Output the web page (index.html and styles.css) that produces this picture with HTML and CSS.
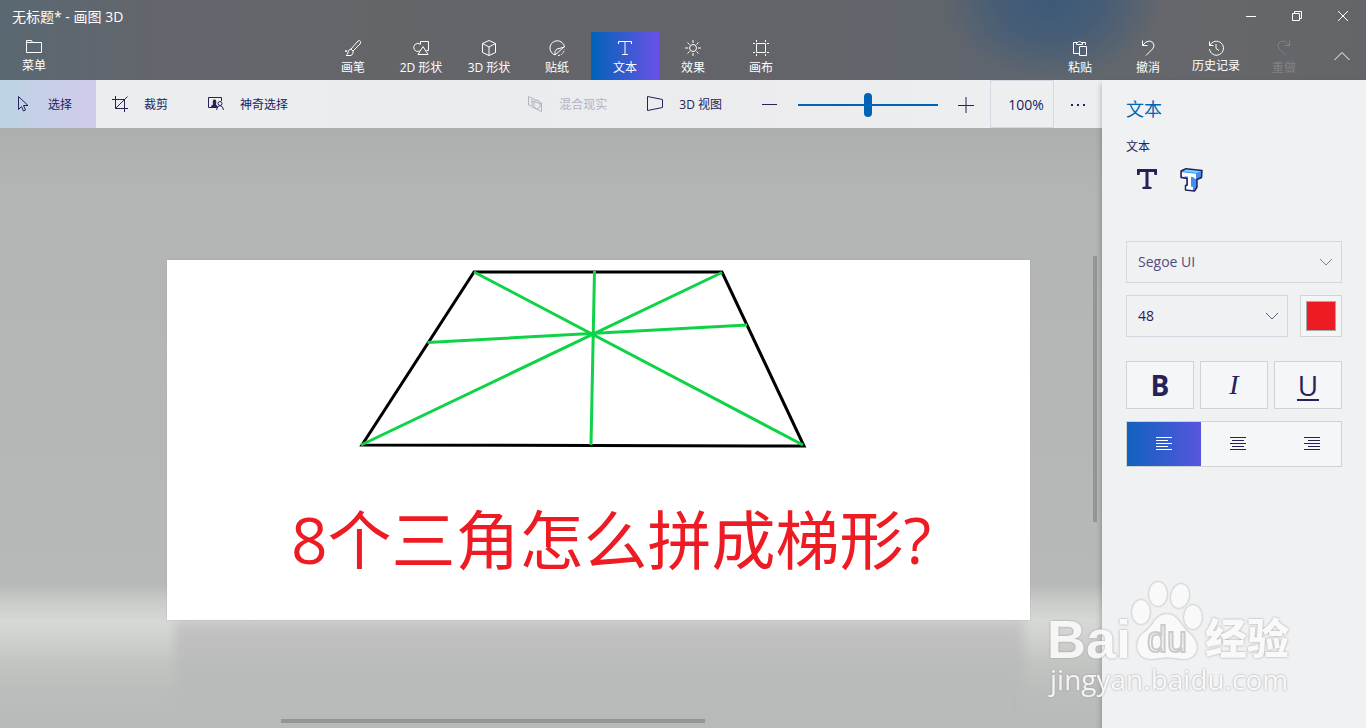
FILE: index.html
```
<!DOCTYPE html>
<html lang="zh-CN">
<head>
  <meta charset="UTF-8">
  <meta name="viewport" content="width=device-width, initial-scale=1.0">
  <title>无标题* - 画图 3D</title>
  <link rel="stylesheet" href="styles.css">
</head>
<body>
  <header class="header">
    <div class="titlebar">
      <h1>无标题* - 画图 3D</h1>
      <div class="window-buttons">
        <button type="button" aria-label="最小化"><svg width="10" height="10" viewBox="0 0 10 10"><path d="M0 5.5h10"/></svg></button>
        <button type="button" aria-label="还原"><svg width="10" height="10" viewBox="0 0 10 10"><path d="M.5 2.5h7v7h-7zM2.5 2.5v-2h7v7h-2"/></svg></button>
        <button type="button" aria-label="关闭"><svg width="10" height="10" viewBox="0 0 10 10"><path d="M0 0l10 10M10 0L0 10"/></svg></button>
      </div>
    </div>
    <nav class="ribbon">
      <button type="button" class="tool tight"><svg width="16" height="16" viewBox="0 0 16 16"><path d="M.5 12.500V.500h5l1 2h9v10zM.5 2.500h6"/></svg><span>菜单</span></button>
      <div class="tools">
        <button type="button" class="tool"><svg width="16" height="16" viewBox="0 0 16 16"><path d="M6 9l7-8q2-1 2.500.500Q16 3 15 4l-7 7zM6 9l2 2q1 3-2 4.500H1q2-1 2-3.500 0-2 3-3zM0 11h2M1 10v2"/></svg><span>画笔</span></button>
        <button type="button" class="tool"><svg width="16" height="16" viewBox="0 0 16 16"><path d="M7.500 4V1.500h8v9h-2M7.500 4.500a4 4 0 1 0-1 6.500M5 14.500l5-8 5 8z"/></svg><span>2D 形状</span></button>
        <button type="button" class="tool"><svg width="16" height="16" viewBox="0 0 16 16"><path d="M8 .5l6.500 3v9L8 15.500l-6.500-3v-9zM1.500 3.500L8 7l6.500-3.500M8 7v8.500"/></svg><span>3D 形状</span></button>
        <button type="button" class="tool"><svg width="16" height="16" viewBox="0 0 16 16"><path d="M6 15A7.300 7.300 0 1 1 15.500 7M6 15q-1-4 2-6 4-1 7.500-2M6 15l9-8"/><path stroke-dasharray="2 1" d="M9 15.500q5-.500 6.500-6"/></svg><span>贴纸</span></button>
        <button type="button" class="tool active"><svg width="16" height="16" viewBox="0 0 16 16"><path d="M1.500 4V1.500h13V4M8 1.500v13M5 14.500h6"/></svg><span>文本</span></button>
        <button type="button" class="tool"><svg width="16" height="16" viewBox="0 0 16 16"><circle cx="8" cy="8" r="3.500"/><path d="M8 0v3M8 13v3M0 8h3M13 8h3M2.500 2.500l2 2M11.500 11.500l2 2M13.500 2.500l-2 2M4.500 11.500l-2 2"/></svg><span>效果</span></button>
        <button type="button" class="tool"><svg width="16" height="16" viewBox="0 0 16 16"><path d="M3.500 3.500h9v9h-9zM3.500 0v2M12.500 0v2M3.500 14v2M12.500 14v2M0 3.500h2M14 3.500h2M0 12.500h2M14 12.500h2"/></svg><span>画布</span></button>
      </div>
      <button type="button" class="tool"><svg width="16" height="16" viewBox="0 0 16 16"><path d="M7 13.500H1.500v-11H5M10 2.500h3.500V5M4.500 4.500v-2H6q1.500-3 3 0h1.500v2zM7.500 6.500h7v9h-7z"/></svg><span>粘贴</span></button>
      <button type="button" class="tool"><svg width="16" height="16" viewBox="0 0 16 16"><path d="M2.500.500v5h5M2.500 5.500q3-4.500 7-4.500 4 .5 4.500 4 0 2-1.500 4L6 15.500"/></svg><span>撤消</span></button>
      <button type="button" class="tool tight"><svg width="16" height="16" viewBox="0 0 16 16"><path d="M1.500 1.500v4h4M2 5.500A7 7 0 1 1 1.500 9M8 4v4.500l3 2"/></svg><span>历史记录</span></button>
      <button type="button" class="tool" disabled><svg width="16" height="16" viewBox="0 0 16 16"><path d="M13.500.500v5h-5M13.500 5.500q-3-4.500-7-4.500-4 .5-4.500 4 0 2 1.500 4l6.500 6.500"/></svg><span>重做</span></button>
      <button type="button" class="collapse" aria-label="折叠"><svg width="16" height="10" viewBox="0 0 16 10"><path d="M.5 9L8 1.500 15.500 9"/></svg></button>
    </nav>
  </header>

  <div class="workspace">
    <main class="editor">
      <div class="toolbar">
        <button type="button" class="command selected"><svg width="16" height="16" viewBox="0 0 16 16"><path d="M2.500.500v13l3-3 2 4.500 2-1-2-4.500h4.500z"/></svg>选择</button>
        <button type="button" class="command"><svg width="16" height="16" viewBox="0 0 16 16"><path d="M0 3.500h12.500V16M3.500 0v12.500H16M3.500 12.500L15.500.500"/></svg>裁剪</button>
        <button type="button" class="command"><svg width="16" height="16" viewBox="0 0 16 16"><path d="M9 11.500H.5v-10h13V5"/><path fill="currentColor" stroke="none" d="M3 11q0-2 2-2.500-1-5 1.500-5T8 8.500L10 11z"/><circle cx="12" cy="7.500" r="2"/><path d="M8.500 14q.5-4 3.500-4.500 3 .5 3.500 4.500"/></svg>神奇选择</button>
        <div class="spacer"></div>
        <button type="button" class="command" disabled><svg width="16" height="16" viewBox="0 0 16 16"><path d="M4 10L1.500 9V.500L11 5M14.500 6.500v9L5 11V3M5 5l9.500 3M7 6l3-2 3 2v5l-3 2-3-2z"/></svg>混合现实</button>
        <button type="button" class="command"><svg width="16" height="16" viewBox="0 0 16 16"><path d="M.5.500v14l15-3v-8z"/></svg>3D 视图</button>
        <button type="button" class="zoom-step" aria-label="缩小"><svg width="16" height="16" viewBox="0 0 16 16"><path d="M0 7.500h15"/></svg></button>
        <input type="range" class="zoom-slider" min="0" max="100" value="50" aria-label="缩放">
        <button type="button" class="zoom-step" aria-label="放大"><svg width="16" height="16" viewBox="0 0 16 16"><path d="M0 8.500h16M8 0v16"/></svg></button>
        <button type="button" class="zoom-value">100%</button>
        <button type="button" class="more" aria-label="更多"><svg width="16" height="4" viewBox="0 0 16 4"><path d="M1 2h2M7 2h2M13 2h2" stroke-width="2"/></svg></button>
      </div>

      <div class="stage">
        <svg class="artboard" viewBox="0 0 863 360" role="img" aria-label="画布">
          <g fill="none" stroke="#000" stroke-width="3">
            <path d="M307 12h248l82 174-442-1z"/>
          </g>
          <g fill="none" stroke="#0fd346" stroke-width="3">
            <path d="M307 12l329 173M555 12.500L194 185M427.500 11L424 185M260.500 82.500L580 65"/>
          </g>
          <text x="124" y="304">8个三角怎么拼成梯形?</text>
        </svg>
        <div class="reflection"></div>
        <div class="scroll-y"></div>
        <div class="scroll-x"></div>
      </div>
    </main>

    <aside class="panel">
      <h2>文本</h2>
      <h3>文本</h3>
      <div class="text-kinds">
        <button type="button" aria-label="2D 文本"><svg width="24" height="24" viewBox="0 0 24 24"><path fill="#25215a" stroke="none" d="M2 1h20v6h-2.500l-.5-3h-5.500v14.500l3 .5v2h-9v-2l3-.5V4H5l-.5 3H2z"/></svg></button>
        <button type="button" aria-label="3D 文本"><svg width="24" height="24" viewBox="0 0 24 24"><path fill="#3d8ef5" stroke="#25215a" stroke-width="1.500" stroke-linejoin="round" d="M2 3l5-2.200 16 1.700-.5 7-4.500 2v7.500L15.500 23 6.500 22v-4.500l1.500-.5v-6.500L2 9.500z"/><path fill="#7cc8ff" stroke="none" d="M7 1.600l15 1.600-4 1.800L4 3.600z"/><path fill="#fff" stroke="none" d="M3 4.200l14 1.600v5l-2-.3-.5-1.500H12V18.500l2 .5v3l-6.700-.7v-3L9 18V8.500H5.500L5 9l-2-.5z"/></svg></button>
      </div>

      <div class="select-box faded">
        <select aria-label="字体"><option>Segoe UI</option></select>
        <svg width="14" height="8" viewBox="0 0 14 8"><path d="M1 1l6 6 6-6"/></svg>
      </div>
      <div class="size-row">
        <div class="select-box">
          <select aria-label="字号"><option>48</option></select>
          <svg width="14" height="8" viewBox="0 0 14 8"><path d="M1 1l6 6 6-6"/></svg>
        </div>
        <button type="button" class="swatch" aria-label="颜色"><span></span></button>
      </div>

      <div class="styles">
        <button type="button" class="bold">B</button>
        <button type="button" class="italic">I</button>
        <button type="button" class="underline"><span>U</span></button>
      </div>
      <div class="aligns">
        <button type="button" class="active" aria-label="左对齐"><svg width="16" height="14" viewBox="0 0 16 14"><path d="M0 .5h16M0 3.500h12M0 6.500h16M0 9.500h12M0 12.500h16"/></svg></button>
        <button type="button" aria-label="居中"><svg width="16" height="14" viewBox="0 0 16 14"><path d="M0 .5h16M2 3.500h12M0 6.500h16M2 9.500h12M0 12.500h16"/></svg></button>
        <button type="button" aria-label="右对齐"><svg width="16" height="14" viewBox="0 0 16 14"><path d="M0 .5h16M4 3.500h12M0 6.500h16M4 9.500h12M0 12.500h16"/></svg></button>
      </div>
    </aside>
  </div>

  <svg class="watermark" width="260" height="130" viewBox="0 0 260 130" aria-label="Baidu 经验">
    <text class="brand" x="3" y="80">Bai</text>
    <ellipse cx="97" cy="34" rx="9" ry="12"/>
    <ellipse cx="114" cy="16" rx="9" ry="12"/>
    <ellipse cx="136" cy="18" rx="9" ry="12" transform="rotate(12 136 18)"/>
    <ellipse cx="149" cy="39" rx="9" ry="12"/>
    <path d="M123 36q7 0 12 7 5 8 13 15 7 8 4 16-4 8-14 7-15-3-29 0-11 1-15-8-3-9 4-17 8-5 13-14 5-6 12-6z"/>
    <text class="du" x="103" y="74">du</text>
    <text class="jingyan" x="161" y="76">经验</text>
    <text class="url" x="6" y="112">jingyan.baidu.com</text>
  </svg>
</body>
</html>
```
FILE: styles.css
```
* {
  box-sizing: border-box;
}
body {
  margin: 0;
  height: 100vh;
  display: flex;
  flex-direction: column;
  overflow: hidden;
  font-family: "Open Sans", "Noto Sans CJK SC", sans-serif;
  font-size: 12px;
  line-height: 16px;
  color: #25215a;
}
h1, h2, h3 {
  margin: 0;
  font-weight: 400;
}
button, select, input {
  margin: 0;
  padding: 0;
  border: 0;
  border-radius: 0;
  background: none;
  font: inherit;
  color: inherit;
}
button {
  display: flex;
  align-items: center;
  justify-content: center;
  white-space: nowrap;
}
button svg, .select-box svg {
  flex-shrink: 0;
  fill: none;
  stroke: currentColor;
}

/* header */
.header {
  flex-shrink: 0;
  color: #fff;
  background:
    radial-gradient(ellipse 110px 80px at 77% 0, rgba(56, 88, 122, 0.9), rgba(56, 88, 122, 0.6) 50%, rgba(56, 88, 122, 0)),
    linear-gradient(90deg, #596872, #62666c 10%, #646569 30%, #626469 60%, #5f666f 76%, #66676b 88%, #646569);
}
.titlebar {
  display: flex;
  justify-content: space-between;
  height: 32px;
}
.titlebar h1 {
  padding-left: 12px;
  font-size: 14px;
  line-height: 34px;
}
.window-buttons {
  display: flex;
}
.window-buttons button {
  width: 46px;
}
.ribbon {
  display: flex;
  height: 48px;
}
.tools {
  flex: 1;
  display: flex;
  justify-content: center;
}
.tool {
  width: 68px;
  flex-direction: column;
  justify-content: flex-start;
  padding-top: 8px;
  gap: 4px;
}
.tool.tight {
  gap: 2px;
}
.tool.active {
  background: linear-gradient(90deg, #0063b8, #6a52e8);
}
.tool:disabled {
  color: #818286;
}
.collapse {
  width: 48px;
}

/* toolbar above the canvas */
.workspace {
  flex: 1;
  display: flex;
  min-height: 0;
}
.editor {
  flex: 1;
  display: flex;
  flex-direction: column;
  min-width: 0;
}
.toolbar {
  display: flex;
  height: 48px;
  flex-shrink: 0;
  background: linear-gradient(90deg, #ededee, #e9edee 40%, #ececee 70%, #eceff0);
}
.toolbar button, .zoom-slider {
  padding-top: 2px;
}
.toolbar .command {
  gap: 16px;
  padding: 2px 24px 0 16px;
}
.command.selected {
  background: linear-gradient(90deg, #bcd4e4, #d1cbeb);
}
.command:disabled {
  color: #b2b3c3;
}
.command svg {
  margin-bottom: 2px;
}
.spacer {
  flex: 1;
}
.zoom-step, .more {
  width: 48px;
}
.zoom-slider {
  appearance: none;
  width: 140px;
  margin: 0 4px;
}
.zoom-slider::-webkit-slider-runnable-track {
  height: 2px;
  background: #0063b8;
}
.zoom-slider::-webkit-slider-thumb {
  appearance: none;
  width: 8px;
  height: 24px;
  margin-top: -11px;
  border-radius: 4px;
  background: #0063b8;
}
.toolbar .zoom-value {
  width: 64px;
  padding-left: 8px;
  border: 1px solid #d5d7e2;
  font-size: 14px;
}

/* canvas */
.stage {
  position: relative;
  flex: 1;
  min-height: 0;
  overflow: hidden;
  padding: 132px 72px 0 167px;
  background: linear-gradient(#adaeae, #b3b5b4 10%, #b5b7b6 50%, #b7b9b8 76%, #cacccA 79%, #d6d8d5 82%, #d3d5d2 84%, #c3c5c2 89%, #bbbdbc 94%, #b8bab9);
}
.artboard {
  display: block;
  position: relative;
  z-index: 1;
  width: 100%;
  background: #fff;
  box-shadow: 0 0 1px #999;
}
.artboard text {
  font-size: 64px;
  fill: #ed1c24;
}
.reflection {
  height: 120px;
  margin: 0 6px 0 8px;
  background: linear-gradient(#c8c9c7, #bfbfbf 14%, #b9bbba 40%, #b8bab9);
  filter: blur(5px);
}
.scroll-y, .scroll-x {
  position: absolute;
  background: #949595;
}
.scroll-y {
  top: 128px;
  right: 5px;
  width: 4px;
  height: 266px;
}
.scroll-x {
  z-index: 1;
  bottom: 5px;
  left: 281px;
  width: 424px;
  height: 4px;
}

/* side panel */
.panel {
  position: relative;
  z-index: 1;
  width: 264px;
  flex-shrink: 0;
  padding: 16px 24px;
  background: #f0f1f3;
  box-shadow: 0 4px 6px rgba(0, 0, 0, 0.3);
}
.panel h2 {
  font-size: 18px;
  line-height: 26px;
  color: #0067b8;
}
.panel h3 {
  margin-top: 17px;
  font-size: 12px;
  line-height: 16px;
}
.text-kinds {
  display: flex;
  gap: 20px;
  padding: 13px 9px 49px;
}
.select-box {
  position: relative;
  flex: 1;
  height: 42px;
  border: 1px solid #d2d7e1;
}
.select-box select {
  appearance: none;
  width: 100%;
  height: 100%;
  padding-left: 11px;
  font-size: 14px;
  line-height: 20px;
}
.select-box svg {
  position: absolute;
  top: 16px;
  right: 8px;
  opacity: 0.7;
  pointer-events: none;
}
.faded {
  color: #514d7b;
}
.size-row {
  display: flex;
  gap: 12px;
  margin-top: 12px;
}
.swatch {
  width: 42px;
  border: 1px solid #d2d3d5;
  background: #f4f5f4;
}
.swatch span {
  width: 30px;
  height: 30px;
  border: 1px solid #a5a9a8;
  background: #ed1c24;
}
.styles {
  display: flex;
  gap: 6px;
  margin-top: 24px;
}
.styles button {
  flex: 1;
  height: 48px;
  border: 1px solid #d0d2d4;
  background: #f5f6f8;
  font-size: 28px;
  line-height: 32px;
}
.styles .bold {
  font-weight: 700;
}
.styles .italic {
  font-family: "Liberation Serif", serif;
  font-style: italic;
}
.underline span {
  width: 22px;
  height: 32px;
  border-bottom: 2px solid #25215a;
}
.aligns {
  display: flex;
  height: 46px;
  margin-top: 12px;
  border: 1px solid #d0d2d4;
  background: #f5f6f8;
  overflow: hidden;
}
.aligns button {
  flex: 0 0 74px;
}
.aligns .active {
  color: #fff;
  background: linear-gradient(90deg, #1261bf, #5656dd);
}

/* watermark over the corner */
.watermark {
  position: absolute;
  z-index: 2;
  right: 62px;
  bottom: 20px;
  fill: #fafafa;
  opacity: 0.9;
  filter: drop-shadow(0 0 1px #999);
  pointer-events: none;
}
.watermark .brand {
  font-family: "Liberation Sans", sans-serif;
  font-size: 54px;
  font-weight: 700;
}
.watermark .du {
  font-family: "Liberation Sans", sans-serif;
  font-size: 36px;
  stroke: #c4c6c8;
  stroke-width: 2px;
}
.watermark .jingyan {
  font-size: 42px;
  font-weight: 900;
}
.watermark .url {
  font-size: 28px;
}
```
